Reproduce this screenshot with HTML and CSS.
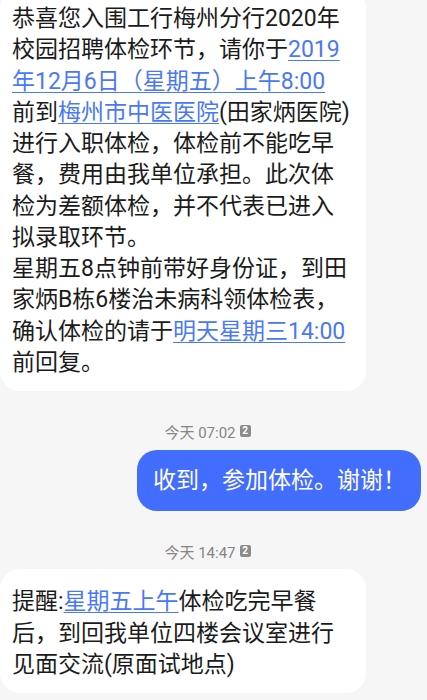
FILE: index.html
```html
<!DOCTYPE html>
<html lang="zh-CN">
<head>
<meta charset="utf-8">
<link rel="stylesheet" href="styles.css">
</head>
<body>
<div class="chat">
  <div class="bubble in">恭喜您入围工行梅州分行2020年校园招聘体检环节，请你于<a class="link">2019年12月6日（星期五）上午8:00</a><br>前到<a class="link">梅州市中医医院</a>(田家炳医院)进行入职体检，体检前不能吃早餐，费用由我单位承担。此次体检为差额体检，并不代表已进入拟录取环节。<br>星期五8点钟前带好身份证，到田家炳B栋6楼治未病科领体检表，确认体检的请于<a class="link">明天星期三14:00</a>前回复。</div>

  <div class="stamp"><span class="stamp-text">今天 07:02</span><span class="sim">2</span></div>

  <div class="row-out"><div class="bubble out">收到，参加体检。谢谢！</div></div>

  <div class="stamp"><span class="stamp-text">今天 14:47</span><span class="sim">2</span></div>

  <div class="bubble in last">提醒:<a class="link">星期五上午</a>体检吃完早餐后，到回我单位四楼会议室进行见面交流(原面试地点)</div>
</div>
</body>
</html>
```

FILE: styles.css
```css
html, body {
  margin: 0;
  padding: 0;
  background: #f6f6f6;
}
body {
  font-family: Roboto, "Noto Sans CJK SC", sans-serif;
  width: 427px;
  height: 700px;
  overflow: hidden;
}
.chat {
  display: flex;
  flex-direction: column;
  margin-top: -12px;
}
.bubble {
  font-size: 23px;
  line-height: 31.25px;
  color: #1b1b1b;
  border-radius: 20px;
  box-sizing: border-box;
}
.bubble.in {
  background: #ffffff;
  width: 366px;
  padding: 15px 13px 13px 12px;
}
.bubble.in.last {
  padding: 17px 13px 13px 12px;
}
.link {
  color: #4a78f7;
  text-decoration: underline;
  text-decoration-thickness: 1px;
  text-underline-offset: 3px;
}
.stamp {
  display: flex;
  justify-content: center;
  align-items: center;
  gap: 4px;
  padding-right: 12px;
  height: 20px;
  margin: 30px 0 9px;
  color: #858585;
  font-size: 15px;
}
.stamp + .bubble.in {
  margin-top: -1px;
}
.sim {
  display: inline-flex;
  align-items: center;
  justify-content: center;
  width: 11px;
  height: 12px;
  border-radius: 2px;
  background: #8c8c8c;
  color: #fff;
  font-size: 10px;
  font-weight: 700;
  line-height: 1;
}
.row-out {
  display: flex;
  justify-content: flex-end;
  padding-right: 6px;
}
.bubble.out {
  background: #436dfd;
  color: #ffffff;
  padding: 15px 15px 15px 16px;
}
```
